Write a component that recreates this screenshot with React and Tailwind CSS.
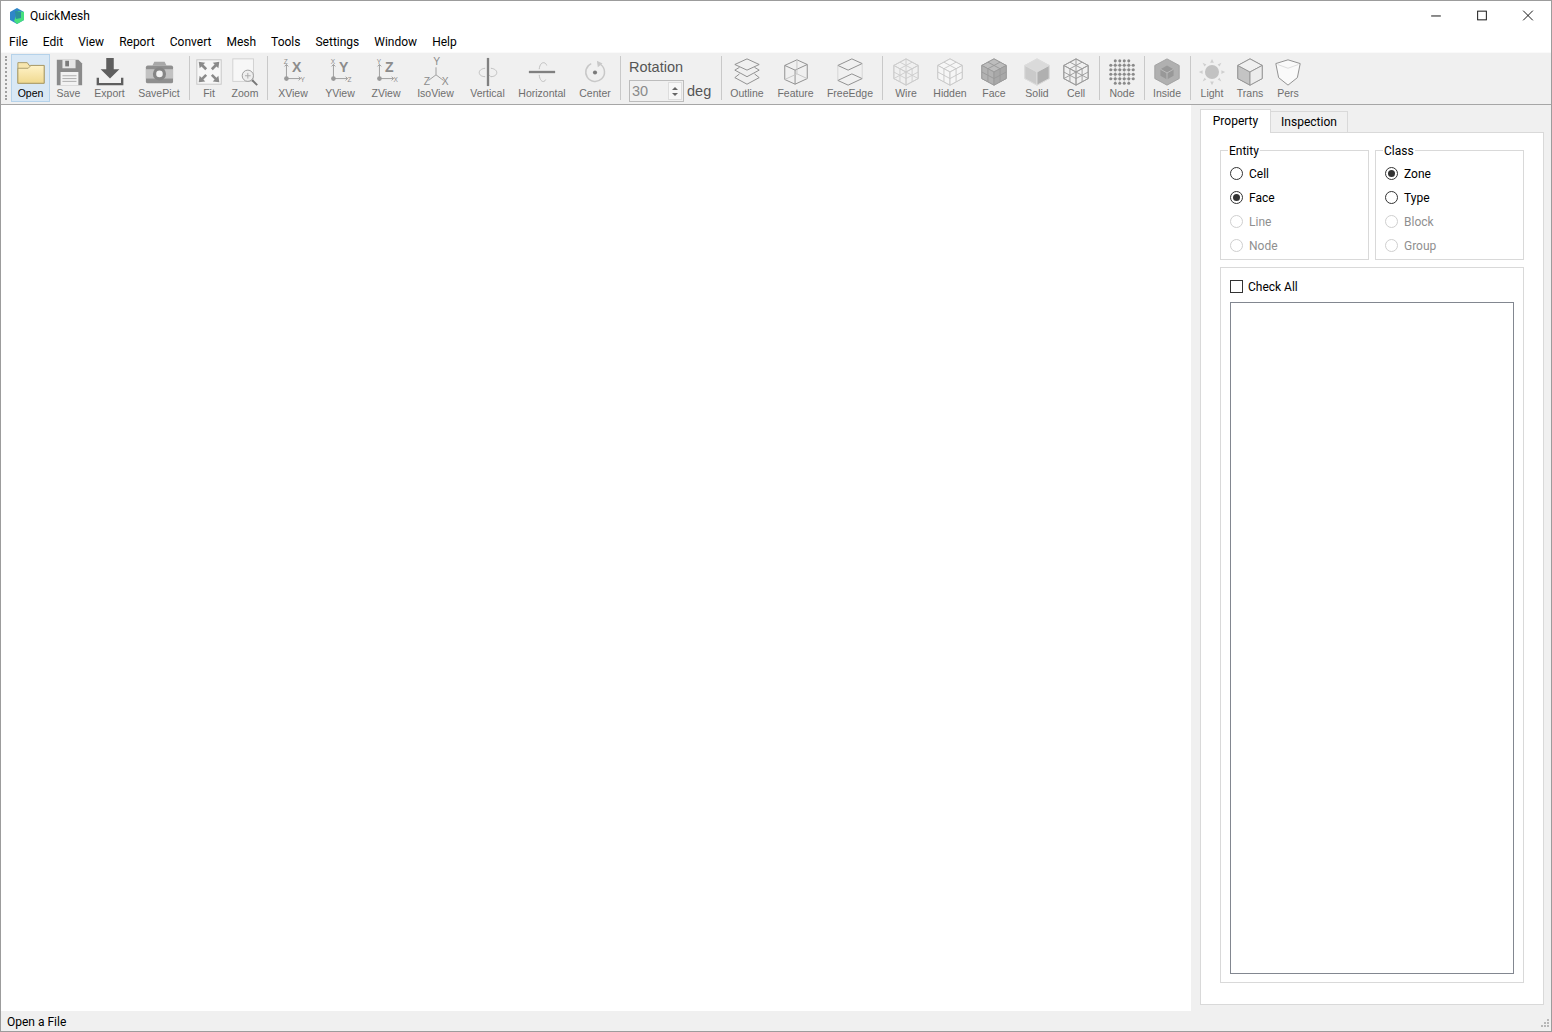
const menus = ['File', 'Edit', 'View', 'Report', 'Convert', 'Mesh', 'Tools', 'Settings', 'Window', 'Help'];

// small isometric cube used by the display mode icons
const Cube = ({ top = 'none', left = 'none', right = 'none', stroke = '#a8a8a8', grid = false, back = false }) => (
  <g stroke={stroke} strokeWidth="1" strokeLinejoin="round">
    <path d="M16 2 L29 9 L29 23 L16 30 L3 23 L3 9 Z" fill="none" />
    <path d="M16 2 L29 9 L16 16 L3 9 Z" fill={top} />
    <path d="M3 9 L16 16 L16 30 L3 23 Z" fill={left} />
    <path d="M29 9 L16 16 L16 30 L29 23 Z" fill={right} />
    {grid && (
      <path
        d="M9.5 5.5 L22.5 12.5 M22.5 5.5 L9.5 12.5 M3 16 L16 23 L29 16 M9.5 12.5 L9.5 26.5 M22.5 12.5 L22.5 26.5"
        fill="none"
      />
    )}
    {back && <path d="M16 16 L16 2 M3 23 L16 16 L29 23" fill="none" />}
  </g>
);

const Axis = ({ big, up, side }) => (
  <g fill="#8c8c8c" fontFamily="Liberation Sans, sans-serif">
    <text x="15" y="16" fontSize="15" fontWeight="700">{big}</text>
    <text x="6" y="7" fontSize="7">{up}</text>
    <text x="24" y="27" fontSize="7">{side}</text>
    <path d="M9 8 V23 M9 23 H24 M7 10 L9 8 L11 10 M22 21 L24 23 L22 25" stroke="#9a9a9a" fill="none" />
    <circle cx="9" cy="23" r="2.5" fill="#999" />
  </g>
);

const nodeDots = [];
for (let row = 0; row < 6; row++) {
  for (let col = 0; col < 6; col++) {
    if ((row === 0 || row === 5) && (col === 0 || col === 5)) continue;
    nodeDots.push([4 + col * 4.8, 4 + row * 4.8]);
  }
}

const icons = {
  open: (
    <>
      <path d="M2 6 H12 L14 9 H30 V28 H2 Z" fill="#f7e6ae" stroke="#a89a6a" />
      <path d="M2 12 H13 L16 9 H30 V28 H2 Z" fill="url(#folder)" stroke="#a89a6a" />
    </>
  ),
  save: (
    <>
      <path d="M3 3 H26 L30 7 V30 H3 Z" fill="#8a8a8a" />
      <rect x="9" y="3" width="14" height="9" fill="#e6e6e6" />
      <rect x="12" y="4" width="4" height="6" fill="#7a7a7a" />
      <rect x="7" y="16" width="19" height="14" fill="#f2f2f2" />
      <path d="M9 20 H24 M9 23 H24 M9 26 H24" stroke="#aaa" />
    </>
  ),
  export: (
    <>
      <path d="M12 1 H20 V13 H26 L16 23 L6 13 H12 Z" fill="#5e5e5e" />
      <path d="M3 22 V29 H29 V22" fill="none" stroke="#5e5e5e" strokeWidth="2.5" />
    </>
  ),
  camera: (
    <>
      <path d="M9 9 L11 5 H22 L24 9 Z" fill="#a8a8a8" />
      <rect x="2" y="9" width="29" height="19" rx="2" fill="#8f8f8f" />
      <rect x="2" y="13" width="29" height="10" fill="#c2c2c2" />
      <circle cx="16.5" cy="18" r="7" fill="#858585" />
      <circle cx="16.5" cy="18" r="3.5" fill="#f2f2f2" />
    </>
  ),
  fit: (
    <>
      <rect x="3" y="3" width="26" height="26" fill="#f7f7f7" stroke="#c4c4c4" />
      <path
        d="M5 5 L12 6 L10 8 L14 12 L12 14 L8 10 L6 12 Z M27 5 L20 6 L22 8 L18 12 L20 14 L24 10 L26 12 Z M5 27 L12 26 L10 24 L14 20 L12 18 L8 22 L6 20 Z M27 27 L20 26 L22 24 L18 20 L20 18 L24 22 L26 20 Z"
        fill="#8a8a8a"
      />
    </>
  ),
  zoom: (
    <>
      <rect x="3" y="2" width="22" height="24" fill="#f7f7f7" stroke="#d0d0d0" />
      <circle cx="19" cy="20" r="6" fill="#eee" stroke="#9a9a9a" />
      <path d="M16 20 H22 M19 17 V23" stroke="#aaa" />
      <path d="M23.5 24.5 L29 30" stroke="#777" strokeWidth="2" />
    </>
  ),
  xview: <Axis big="X" up="Z" side="Y" />,
  yview: <Axis big="Y" up="X" side="Z" />,
  zview: <Axis big="Z" up="Y" side="X" />,
  iso: (
    <g fill="#8c8c8c" fontFamily="Liberation Sans, sans-serif" fontSize="11">
      <text x="13" y="9">Y</text>
      <text x="3" y="30">Z</text>
      <text x="22" y="30">X</text>
      <path d="M16 11 V19 L8 25 M16 19 L24 25" stroke="#9a9a9a" fill="none" />
    </g>
  ),
  vertical: (
    <>
      <path d="M13 12 C4 13 5 21 13 21 M19 12 C28 13 27 21 19 21 L17 19" stroke="#bdbdbd" fill="none" />
      <path d="M16 1 V31" stroke="#808080" strokeWidth="2.5" />
    </>
  ),
  horizontal: (
    <>
      <path d="M13 13 C14 4 20 5 21 9 M13 19 C14 28 19 27 20 24" stroke="#bdbdbd" fill="none" />
      <path d="M2 16 H30" stroke="#808080" strokeWidth="2.5" />
    </>
  ),
  center: (
    <>
      <path d="M22 8 A10 10 0 1 1 12 7" stroke="#c8c8c8" strokeWidth="1.6" fill="none" />
      <path d="M18 4 L24 7 L19 11 Z" fill="#c8c8c8" />
      <circle cx="16" cy="16.5" r="2.2" fill="#7a7a7a" />
    </>
  ),
  outline: (
    <g stroke="#8c8c8c" fill="none">
      <path d="M16 2 L29 8 L16 14 L3 8 Z" />
      <path d="M8 11 L3 14 L16 21 L29 14 L24 11" />
      <path d="M8 18 L3 22 L16 29 L29 22 L24 18" />
    </g>
  ),
  feature: (
    <g stroke="#8c8c8c" fill="none">
      <path d="M4 9 L17 3 L28 8 V23 L15 29 L4 24 Z" />
      <path d="M4 9 L15 14 L28 8 M15 14 V29" />
      <path d="M4 24 L17 18 L28 23 M17 3 V18" stroke="#c4c4c4" />
    </g>
  ),
  freeedge: (
    <g stroke="#8c8c8c" fill="none">
      <path d="M3 9 L18 2 L29 7 L14 14 Z" />
      <path d="M3 25 L18 18 L29 23 L14 30 Z" />
      <path d="M3 9 V25 M29 7 V23" stroke="#d4d4d4" />
    </g>
  ),
  wire: <Cube stroke="#cdcdcd" grid back />,
  hidden: <Cube stroke="#c8c8c8" top="#f6f6f6" left="#f6f6f6" right="#f6f6f6" grid />,
  face: <Cube stroke="#9a9a9a" top="#bdbdbd" left="#b2b2b2" right="#a8a8a8" grid />,
  solid: <Cube stroke="#dcdcdc" top="#dadada" left="#cacaca" right="#b0b0b0" />,
  cell: <Cube stroke="#9c9c9c" grid back />,
  node: (
    <g fill="#8a8a8a">
      <path d="M4 8.8 H28 M4 13.6 H28 M4 18.4 H28 M4 23.2 H28 M8.8 4 V28 M13.6 4 V28 M18.4 4 V28 M23.2 4 V28" stroke="#c8c8c8" />
      {nodeDots.map(([cx, cy]) => (
        <circle key={`${cx}-${cy}`} cx={cx} cy={cy} r="1.6" />
      ))}
    </g>
  ),
  inside: (
    <>
      <path d="M16 2 L29 9 V23 L16 30 L3 23 V9 Z" fill="#b0b0b0" stroke="#a0a0a0" />
      <path d="M16 9 L23 13 V20 L16 24 L9 20 V13 Z" fill="#989898" />
      <path d="M9 13 L16 17 L23 13 M16 17 V24" stroke="#bdbdbd" fill="none" />
    </>
  ),
  light: (
    <>
      <circle cx="16" cy="16" r="7.5" fill="#c2c2c2" />
      <path
        d="M16 2 L18 6 H14 Z M16 30 L18 26 H14 Z M2 16 L6 14 V18 Z M30 16 L26 14 V18 Z M6 6 L10 8 L8 10 Z M26 6 L22 8 L24 10 Z M6 26 L10 24 L8 22 Z M26 26 L22 24 L24 22 Z"
        fill="#cfcfcf"
      />
    </>
  ),
  trans: (
    <g stroke="#959595" strokeLinejoin="round">
      <path d="M16 2 L29 9 V23 L16 30 L3 23 V9 Z" fill="#d9d9d9" />
      <path d="M3 9 L16 16 L16 30 L3 23 Z" fill="#c4c4c4" />
      <path d="M16 2 L29 9 L16 16 L3 9 Z" fill="#f0f0f0" />
      <path d="M29 9 L16 16 L16 30 L29 23 Z" fill="#ececec" />
    </g>
  ),
  pers: (
    <g stroke="#8c8c8c" strokeLinejoin="round">
      <path d="M3 7 L16 3 L29 7 L26 22 L16 30 L6 22 Z" fill="#fafafa" />
      <path d="M5 8 L16 12 L27 8" fill="none" stroke="#dcdcdc" />
    </g>
  ),
};

const ToolButton = ({ icon, label, width, active }) => (
  <div
    className={`flex h-[48px] flex-col items-center ${width} ${
      active ? 'border border-[#b5d2ea] bg-[#d9e8f5] text-black' : 'border border-transparent text-[#6e6e6e]'
    }`}
  >
    <svg viewBox="0 0 32 32" className="mt-[2px] h-[30px] w-[30px] shrink-0">
      <defs>
        <linearGradient id="folder" x1="0" y1="0" x2="0" y2="1">
          <stop offset="0" stopColor="#fff3c8" />
          <stop offset="1" stopColor="#f0d98f" />
        </linearGradient>
      </defs>
      {icons[icon]}
    </svg>
    <span className="text-[10.5px] leading-[13px]">{label}</span>
  </div>
);

const Sep = ({ className }) => <div className={`h-[44px] w-px bg-[#c9c9c9] ${className}`} />;

const Radio = ({ label, checked, disabled }) => (
  <div className={`flex h-[24px] items-center gap-[6px] ${disabled ? 'text-[#8f8f8f]' : 'text-black'}`}>
    <span
      className={`mb-[2px] flex h-[13px] w-[13px] items-center justify-center rounded-full border bg-white ${
        disabled ? 'border-[#cfcfcf]' : 'border-[#333333]'
      }`}
    >
      {checked && <span className="h-[7px] w-[7px] rounded-full bg-[#333333]" />}
    </span>
    {label}
  </div>
);

const Group = ({ title, items, className }) => (
  <div className={`relative h-[110px] border border-[#d9d9d9] pl-[9px] pt-[11px] ${className}`}>
    <span className="absolute -top-[7px] left-[7px] bg-white px-px leading-[15px] text-black">{title}</span>
    {items.map((item) => (
      <Radio key={item.label} {...item} />
    ))}
  </div>
);

const App = () => {
  return (
    <div className="flex h-[1032px] w-[1552px] flex-col overflow-hidden border border-[#9c9c9c] bg-white font-['Roboto',sans-serif] text-[12px]">
      {/* Title bar */}
      <div className="flex h-[29px] shrink-0 items-center pl-[8px]">
        <svg viewBox="0 0 16 16" className="h-[16px] w-[16px]">
          <path d="M8 0 L15 4 V12 L8 16 L1 12 V4 Z" fill="#2f86c8" />
          <path d="M9 3 L15 4 V12 L8 16 L5 13 Z" fill="#46e07e" />
          <path d="M6 3 L12 4 V10 L7 11 Z" fill="#2a8f9a" />
        </svg>
        <span className="ml-[5px] text-black">QuickMesh</span>
        <div className="ml-auto flex items-center">
          <svg viewBox="0 0 46 30" className="h-[29px] w-[46px]">
            <path d="M18 15.5 H28" stroke="#111" />
          </svg>
          <svg viewBox="0 0 46 30" className="h-[29px] w-[46px]">
            <rect x="18.5" y="10.5" width="9" height="9" fill="none" stroke="#111" />
          </svg>
          <svg viewBox="0 0 46 30" className="h-[29px] w-[46px]">
            <path d="M18 10 L28 20 M28 10 L18 20" stroke="#111" />
          </svg>
        </div>
      </div>

      {/* Menu bar */}
      <div className="flex h-[22px] shrink-0 items-center gap-[15px] pl-[8px] pt-[2px] text-black">
        {menus.map((m) => (
          <span key={m}>{m}</span>
        ))}
      </div>

      {/* Toolbar */}
      <div className="flex h-[53px] shrink-0 items-start border-b border-b-[#a6a6a6] border-t border-t-[#fafafa] bg-[#f0f0f0] pt-px font-['Liberation_Sans',sans-serif]">
        <div className="ml-[4px] mr-[4px] mt-[2px] h-[44px] w-[2px] border-l-2 border-dotted border-[#a0a0a0]" />
        <ToolButton icon="open" label="Open" width="w-[39px]" active />
        <ToolButton icon="save" label="Save" width="w-[37px]" />
        <ToolButton icon="export" label="Export" width="w-[45px]" />
        <ToolButton icon="camera" label="SavePict" width="w-[54px]" />
        <Sep className="ml-[3px] mr-[3px] mt-[2px]" />
        <ToolButton icon="fit" label="Fit" width="w-[32px]" />
        <ToolButton icon="zoom" label="Zoom" width="w-[40px]" />
        <Sep className="ml-[2px] mr-[2px] mt-[2px]" />
        <ToolButton icon="xview" label="XView" width="w-[46px]" />
        <ToolButton icon="yview" label="YView" width="w-[48px]" />
        <ToolButton icon="zview" label="ZView" width="w-[44px]" />
        <ToolButton icon="iso" label="IsoView" width="w-[55px]" />
        <ToolButton icon="vertical" label="Vertical" width="w-[49px]" />
        <ToolButton icon="horizontal" label="Horizontal" width="w-[60px]" />
        <ToolButton icon="center" label="Center" width="w-[46px]" />
        <Sep className="ml-[2px] mt-[2px]" />
        <div className="h-[48px] w-[100px] pl-[8px] text-[14.5px] leading-[18px] text-[#555555]">
          <div className="mt-[4px]">Rotation</div>
          <div className="mt-[4px] flex items-center">
            <div className="flex h-[22px] w-[55px] items-center justify-between border border-[#bcbcbc] bg-[#f0f0f0] pl-[2px] text-[#8a8a8a]">
              30
              <div className="mr-px flex h-[18px] w-[14px] flex-col items-center justify-center gap-[3px] border border-[#dddddd] bg-[#f7f7f7]">
                <span className="h-0 w-0 border-x-[3px] border-b-[3px] border-x-transparent border-b-[#666666]" />
                <span className="h-0 w-0 border-x-[3px] border-t-[3px] border-x-transparent border-t-[#666666]" />
              </div>
            </div>
            <span className="ml-[3px]">deg</span>
          </div>
        </div>
        <Sep className="mr-[2px] mt-[2px]" />
        <ToolButton icon="outline" label="Outline" width="w-[46px]" />
        <ToolButton icon="feature" label="Feature" width="w-[51px]" />
        <ToolButton icon="freeedge" label="FreeEdge" width="w-[58px]" />
        <Sep className="ml-[3px] mr-px mt-[2px]" />
        <ToolButton icon="wire" label="Wire" width="w-[44px]" />
        <ToolButton icon="hidden" label="Hidden" width="w-[44px]" />
        <ToolButton icon="face" label="Face" width="w-[44px]" />
        <ToolButton icon="solid" label="Solid" width="w-[42px]" />
        <ToolButton icon="cell" label="Cell" width="w-[36px]" />
        <Sep className="ml-[5px] mr-[2px] mt-[2px]" />
        <ToolButton icon="node" label="Node" width="w-[40px]" />
        <Sep className="ml-[2px] mr-[2px] mt-[2px]" />
        <ToolButton icon="inside" label="Inside" width="w-[40px]" />
        <Sep className="ml-[3px] mr-[2px] mt-[2px]" />
        <ToolButton icon="light" label="Light" width="w-[38px]" />
        <ToolButton icon="trans" label="Trans" width="w-[38px]" />
        <ToolButton icon="pers" label="Pers" width="w-[38px]" />
      </div>

      {/* Main area */}
      <div className="flex min-h-0 flex-1">
        <div className="flex-1 bg-white" />
        <div className="flex w-[360px] shrink-0 flex-col bg-[#f0f0f0] pb-[6px] pl-[9px] pr-[7px] pt-[4px]">
          <div className="relative z-10 flex h-[23px] shrink-0 items-start">
            <div className="-mb-px flex h-[24px] w-[71px] items-center justify-center border border-b-0 border-[#d9d9d9] bg-white pb-[2px] text-black">
              Property
            </div>
            <div className="mt-[2px] flex h-[21px] w-[77px] items-center justify-center border border-b-0 border-l-0 border-[#d9d9d9] bg-[#f0f0f0] text-black">
              Inspection
            </div>
          </div>
          <div className="flex min-h-0 flex-1 flex-col border border-[#d9d9d9] bg-white pb-[21px] pl-[19px] pr-[19px] pt-[17px]">
            <div className="flex shrink-0 gap-[6px]">
              <Group
                title="Entity"
                className="w-[149px]"
                items={[{ label: 'Cell' }, { label: 'Face', checked: true }, { label: 'Line', disabled: true }, { label: 'Node', disabled: true }]}
              />
              <Group
                title="Class"
                className="flex-1"
                items={[{ label: 'Zone', checked: true }, { label: 'Type' }, { label: 'Block', disabled: true }, { label: 'Group', disabled: true }]}
              />
            </div>
            <div className="mt-[7px] flex min-h-0 flex-1 flex-col border border-[#d9d9d9] px-[9px] pb-[8px] pt-[11px]">
              <div className="flex h-[15px] shrink-0 items-center gap-[5px] text-black">
                <span className="h-[13px] w-[13px] border border-[#333333] bg-white" />
                Check All
              </div>
              <div className="mt-[8px] min-h-0 flex-1 border border-[#828790] bg-white" />
            </div>
          </div>
        </div>
      </div>

      {/* Status bar */}
      <div className="relative flex h-[20px] shrink-0 items-center bg-[#f0f0f0] pl-[6px] pt-[2px] text-black">
        Open a File
        <svg viewBox="0 0 12 12" className="absolute bottom-px right-px h-[12px] w-[12px]">
          <path d="M9 1 h2 v2 h-2 z M6 4 h2 v2 h-2 z M9 4 h2 v2 h-2 z M3 7 h2 v2 h-2 z M6 7 h2 v2 h-2 z M9 7 h2 v2 h-2 z" fill="#b8b8b8" />
        </svg>
      </div>
    </div>
  );
};

export default App;
